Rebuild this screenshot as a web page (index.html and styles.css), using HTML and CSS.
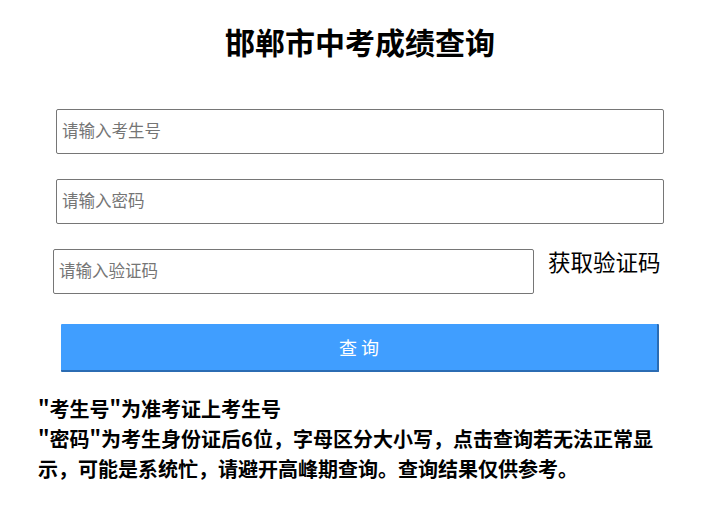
FILE: index.html
```html
<!DOCTYPE html>
<html lang="zh-CN">
<head>
<meta charset="utf-8">
<title>邯郸市中考成绩查询</title>
<link rel="stylesheet" href="styles.css">
</head>
<body>
<div class="wrap">
  <h1 class="title">邯郸市中考成绩查询</h1>
  <form class="form">
    <input class="field" type="text" placeholder="请输入考生号">
    <input class="field" type="password" placeholder="请输入密码">
    <div class="code-row">
      <input class="field code" type="text" placeholder="请输入验证码">
      <span class="get-code">获取验证码</span>
    </div>
    <button class="submit" type="button">查询</button>
  </form>
</div>
<div class="notes">
  <p>"考生号"为准考证上考生号</p>
  <p>"密码"为考生身份证后6位，字母区分大小写，点击查询若无法正常显示，可能是系统忙，请避开高峰期查询。查询结果仅供参考。</p>
</div>
</body>
</html>
```
FILE: styles.css
```css
html, body {
  margin: 0;
  padding: 0;
  background: #fff;
  font-family: "Noto Sans CJK SC", "Noto Sans", sans-serif;
  color: #000;
}
.wrap {
  margin-left: 56px;
  width: 608px;
}
.title {
  margin: 21px 0 0;
  font-size: 30px;
  line-height: 40px;
  font-weight: 700;
  text-align: center;
}
.form {
  display: flex;
  flex-direction: column;
  margin-top: 48px;
}
.field {
  box-sizing: border-box;
  height: 45px;
  width: 608px;
  margin: 0 0 25px;
  padding: 0 5px 4px;
  border: 1px solid #767676;
  border-radius: 2px;
  font-family: "Noto Sans CJK SC", sans-serif;
  font-size: 16.5px;
  color: #000;
  background: #fff;
  outline: none;
}
.field::placeholder {
  color: #757575;
}
.code-row {
  display: flex;
  align-items: flex-start;
  margin-left: -3px;
}
.field.code {
  width: 481px;
  margin: 0;
  flex: none;
}
.get-code {
  margin-left: 14px;
  margin-top: -1px;
  font-size: 22.5px;
  line-height: 26px;
  white-space: nowrap;
}
.submit {
  box-sizing: border-box;
  margin: 30px 0 0 5px;
  width: 598px;
  height: 48px;
  background: #409eff;
  border: none;
  border-right: 2px solid #2b6cb3;
  border-bottom: 2px solid #2b6cb3;
  border-radius: 1px;
  color: #fff;
  font-family: "Noto Sans CJK SC", sans-serif;
  font-size: 18px;
  letter-spacing: 4px;
  text-indent: 4px;
  padding: 0;
}
.notes {
  margin: 22px 0 0 38px;
  width: 630px;
  font-size: 20px;
  line-height: 30px;
  font-weight: 700;
}
.notes p {
  margin: 0;
}
```
